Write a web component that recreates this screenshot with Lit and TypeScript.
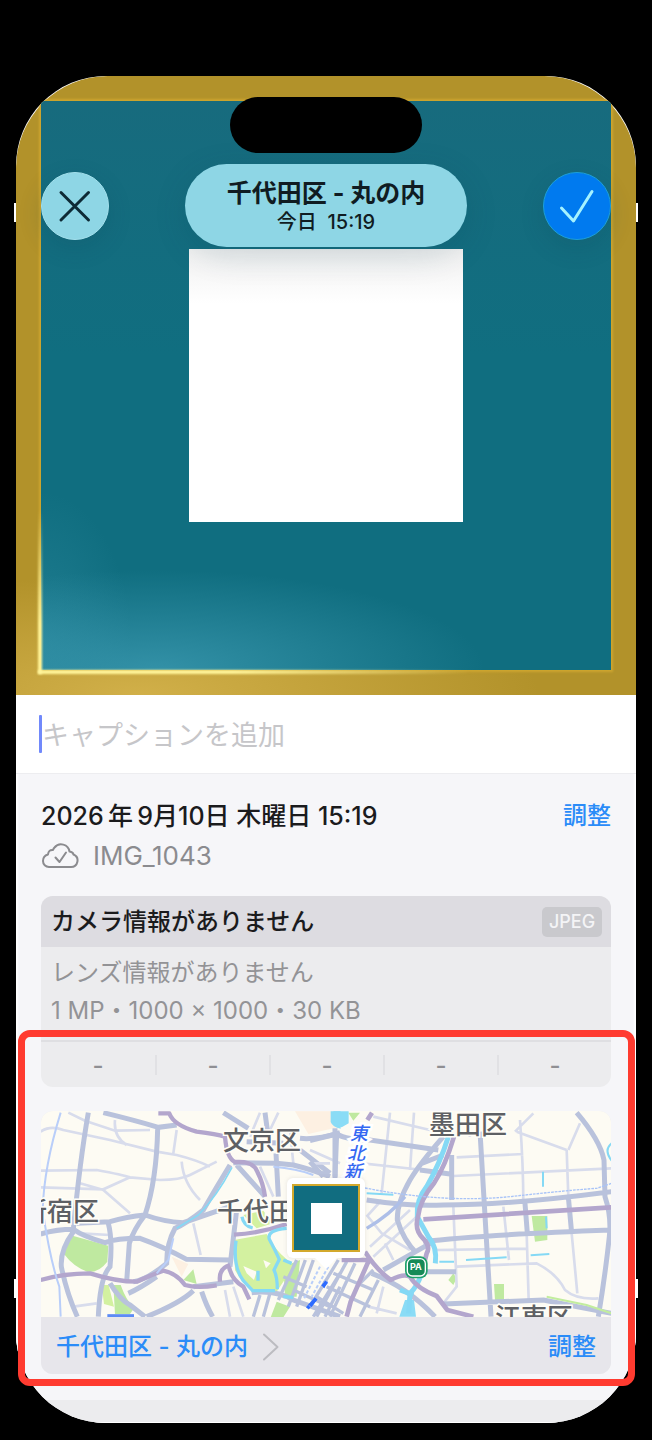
import { LitElement, html, css, svg } from "lit";
import { customElement, property } from "lit/decorators.js";

const leftHalf = svg`
  <g transform="translate(-11 -11) scale(.33333)">
    <g fill="#bfe9a0">
      <path d="M120 405L235 437 232 485Q205 520 172 515 130 500 102 462Z"/>
      <path d="M250 555L272 555Q288 600 312 625L300 642 255 642Z"/>
      <path d="M460 540L490 508 500 552ZM740 605L780 620 760 652 722 652ZM760 500L810 480 800 590 765 590Z"/>
    </g>
    <g fill="#d3f1a0">
      <path d="M612 420L710 402Q735 450 770 478L790 500 740 575 680 575Q640 560 615 510Z"/>
      <path d="M640 345L700 332 730 370 680 385ZM215 555L236 555 252 620 222 612Z"/>
    </g>
    <path fill="#fdf0e2" d="M425 470L475 492 455 530ZM795 34L930 34 930 80 835 102Z"/>
    <path fill="#fdfbf3" d="M640 498L680 515 672 540 650 520ZM700 480L722 490 708 505Z"/>
    <path fill="#8adcf6" d="M902 34h30v52q-24-4-30-20z"/>
    <g fill="none" stroke="#d8dcec" stroke-width="8">
      <path d="M32 95Q60 75 100 90L240 120 380 155 440 165Q500 180 540 200M115 38L165 62 255 92 360 90M255 60Q250 110 290 135M440 90L430 160M32 212L200 210Q280 225 300 232L390 240Q450 240 480 225L560 185M32 262L220 268 300 232M150 250L220 270 300 340M455 185Q460 250 510 300M490 370L512 465M150 400L240 405M130 620L200 610M585 570L600 650M610 560L640 650M690 38L660 110M745 38L720 90M690 200L730 290M840 150L930 190M780 90L790 190"/>
    </g>
    <g fill="none" stroke="#b9c2dc" stroke-width="15">
      <path d="M175 38Q150 180 130 388M220 38Q310 60 385 82L440 75M383 85Q380 240 345 345 310 390 298 430L290 545M600 195Q560 260 520 330 470 370 435 385 410 430 410 490 350 540 310 545M140 370Q180 368 240 365 290 350 345 345 400 365 460 368L600 320M32 402Q80 388 130 388 160 410 225 428 260 415 330 415 400 440 470 478L600 480M235 370Q248 420 240 500 210 530 205 650M130 395Q90 450 94 500 110 580 142 650M240 550Q270 600 300 615L345 650M380 530Q330 565 295 580M350 650Q450 610 490 572M515 575Q530 620 548 650M580 38L655 85M705 38L712 90M738 160L745 290M610 188L740 190 790 195Q850 210 900 230M620 195L705 290M810 150L900 220M930 98Q860 120 810 115M915 85V235M650 125L760 130M620 330L600 500M490 560L610 545M665 578Q740 570 790 600L930 650"/>
    </g>
    <g fill="none" stroke="#b9c2dc" stroke-width="10">
      <path d="M800 480L745 600M826 480L775 620M850 480L800 620M690 585L670 650M720 580L700 650M930 520L850 650M930 560L885 650M790 570L900 620M760 530L830 560"/>
    </g>
    <g fill="none" stroke="#b3a6cd" stroke-width="13" stroke-linejoin="round">
      <path d="M385 40H418Q430 75 500 95 560 102 585 110 590 175 615 186 670 182 682 215 700 250 705 290M32 540Q100 520 180 520 260 545 320 545 370 522 400 512 440 520 465 555 500 566 560 556M570 545Q565 505 600 495M597 500Q605 540 640 560L658 598M612 404Q690 400 770 372"/>
    </g>
    <g fill="none" stroke="#85d9f5" stroke-width="10">
      <path d="M770 385Q710 390 718 418 735 450 748 478L732 510Q742 530 742 568M618 422Q608 500 640 542L668 572 735 572M636 350Q640 376 668 384M684 512V542M760 480L785 490M760 590L790 592"/>
      <path stroke-width="5" d="M606 202Q560 290 505 345L440 385"/>
    </g>
    <g fill="none" stroke="#b9cef9" stroke-width="6">
      <path d="M92 38Q42 200 38 330 60 480 88 560L92 650M430 415L415 480 380 520M730 200Q800 205 850 225"/>
      <path stroke-dasharray="10 6" d="M870 500L820 600M895 500L845 590"/>
    </g>
    <path fill="none" stroke="#2d6bff" stroke-width="11" d="M888 542L878 562M858 595L832 625"/>
    <path fill="none" stroke="#5d8bf5" stroke-width="9" d="M232 647H312"/>
  </g>`;

const rightHalf = svg`
  <g transform="translate(269 -11) scale(.33333)">
    <path fill="#bfe9a0" d="M665 348H712V420L675 425ZM552 552H582V600H555ZM115 38H150L130 62ZM415 540L430 520 440 535 430 555Z"/>
    <path fill="#8adcf6" d="M70 34H116V70L95 82 72 74ZM285 600H312L318 650H268Z"/>
    <g fill="none" stroke="#d8dcec" stroke-width="8">
      <path d="M240 38L215 280M312 38L300 210M630 60Q640 200 640 310M770 150L775 290M810 70L775 150M620 95L770 150M615 95L670 40M440 172L640 162M430 228L905 205M110 185L340 210M190 50L360 90M785 400L802 580M650 400L656 600M430 320L440 560 400 610M580 320L597 480M380 450L650 446M440 500L680 490Q740 520 765 570 800 600 865 595M170 345L215 400 300 450M190 470L320 350M180 440L300 330M215 300L170 350M250 480L225 430M470 60L480 110M0 190H60M175 620L260 640M220 560L200 640"/>
    </g>
    <g fill="none" stroke="#b9c2dc" stroke-width="15">
      <path d="M0 122L80 102Q110 120 180 120L385 150M80 100L75 230M0 185L40 230M400 110Q330 190 300 240 260 310 262 360 280 420 320 460M425 165V300M510 95L543 650M800 38Q870 120 882 180L885 290Q905 350 898 410 885 530 865 650M170 300Q300 320 400 315 600 315 905 275M340 425Q500 405 905 390M775 290L785 400M645 310L652 400M220 510L370 425M350 515H438M400 612L700 600Q800 620 905 640M185 520Q290 560 375 650M330 210L420 222M400 165L335 190"/>
    </g>
    <g fill="none" stroke="#b9c2dc" stroke-width="10">
      <path d="M85 480L0 620M110 485L20 650M135 490L60 650M205 540L150 650M190 510L140 560M70 520L190 570M50 560L180 620M20 590L100 640"/>
    </g>
    <path fill="none" stroke="#aebfe8" stroke-width="10" d="M170 385Q240 345 285 290"/>
    <g fill="none" stroke="#85d9f5" stroke-width="15">
      <path d="M415 110Q390 190 350 260 318 300 322 350L355 410Q382 440 376 490"/>
      <path d="M335 520Q322 560 300 580L296 640M270 570L310 585"/>
      <path stroke-width="6" d="M388 485H432M468 480L590 472M662 466L718 462M699 215V260M905 130Q880 150 905 182M708 350L710 385M170 280L250 284"/>
    </g>
    <path fill="none" stroke="#c2ed9e" stroke-width="6" d="M710 590L830 615 905 640"/>
    <g fill="none" stroke="#b3a6cd" stroke-width="14" stroke-linejoin="round">
      <path d="M186 38L172 60M432 110Q405 200 372 250 330 300 324 350 312 390 340 416 362 440 350 460L345 480M340 358L905 322M165 455Q200 510 242 540 280 520 300 530 320 565 380 588L412 630 490 650M178 478L122 605 110 650M95 480H178"/>
    </g>
    <path fill="none" stroke="#a9c4f8" stroke-width="4" stroke-dasharray="8 3" d="M165 264Q400 310 600 290 780 270 860 265L905 250"/>
    <path fill="none" stroke="#2d6bff" stroke-width="11" d="M50 545L38 560M18 595L0 618"/>
    <g>
      <rect x="285" y="469" width="68" height="66" rx="22" fill="#20a16c"/>
      <rect x="292" y="476" width="54" height="52" rx="15" fill="#168a58" stroke="#fff" stroke-width="4"/>
    </g>
  </g>`;

@customElement("round-button")
class RoundButton extends LitElement {
  @property() label = "";
  @property() kind = "close";
  static styles = css`
    :host { display: block; }
    button {
      display: grid; place-items: center; width: 68px; height: 68px; padding: 0;
      border-radius: 50%; border: 1px solid #a3e0ec; background: #8ed6e5; color: #0d2a35;
      box-shadow: 0 8px 24px rgba(10, 60, 80, 0.16);
    }
    .done { background: #007aef; border-color: #1c9fd8; color: #a4f2ff; }
    svg { display: block; width: 66px; height: 66px; }
  `;
  render() {
    return html`<button class=${this.kind} aria-label=${this.label}>
      <svg viewBox="1 1 66 66" fill="none" stroke="currentColor" stroke-width="3" stroke-linecap="round" stroke-linejoin="round">
        ${this.kind === "close"
          ? svg`<path d="M20 20.500L47.500 48M47.500 20.500L20 48"/>`
          : svg`<path d="M18.500 36L30.500 49 49 19.500"/>`}
      </svg>
    </button>`;
  }
}

@customElement("photo-map")
class PhotoMap extends LitElement {
  static styles = css`
    :host { display: block; position: relative; height: 206px; overflow: hidden; background: #fdfbf3; }
    .map { display: block; width: 100%; height: 100%; }
    text { font-family: Inter, "Noto Sans CJK JP", sans-serif; }
    .ward { font-size: 26px; font-weight: 500; fill: #5e6064; stroke: #fffef8; stroke-width: 3px; paint-order: stroke; }
    .line { font-size: 18px; font-weight: 500; font-style: italic; fill: #3468f2; stroke: #fff; stroke-width: 5px; paint-order: stroke; }
    .pa { font-size: 9px; font-weight: 700; fill: #fff; }
    .pin {
      position: absolute; left: 50%; top: 67px; transform: translateX(-50%);
      width: 78px; height: 80px; box-sizing: border-box; padding: 6px 5px;
      border-radius: 6px; background: #fff; box-shadow: 0 0 4px rgba(90, 90, 110, 0.15);
    }
    .pin::after {
      content: ""; position: absolute; left: 50%; top: 100%; margin-left: -11px;
      border: 11px solid transparent; border-top-color: #fff; border-bottom: 0;
    }
    .thumb {
      display: grid; place-items: center; box-sizing: border-box; height: 100%;
      border: 2px solid #d3a92c; background: #116d80;
    }
    .thumb span { width: 31px; height: 31px; background: #fff; }
  `;
  render() {
    return html`
      <svg class="map" viewBox="0 0 570 206" preserveAspectRatio="xMidYMid slice" role="img" aria-label="地図">
        ${leftHalf}${rightHalf}
        <text class="ward" x="182" y="39">文京区</text>
        <text class="ward" x="388" y="23">墨田区</text>
        <text class="ward" x="-20" y="110">新宿区</text>
        <text class="ward" x="176" y="110">千代田区</text>
        <text class="ward" x="454" y="216">江東区</text>
        <text class="line" x="309" y="29">東</text>
        <text class="line" x="306" y="49">北</text>
        <text class="line" x="303" y="67">新</text>
        <text class="pa" x="369" y="159">PA</text>
      </svg>
      <div class="pin"><div class="thumb"><span></span></div></div>
    `;
  }
}

@customElement("app-root")
class AppRoot extends LitElement {
  static styles = css`
    :host {
      display: block; min-height: 100vh; box-sizing: border-box; padding: 76px 16px 17px;
      background: #000; color: #1b1b1d;
      font: 500 24px/32px Inter, "Noto Sans CJK JP", sans-serif;
    }
    .device { position: relative; }
    .device::before, .device::after {
      content: ""; position: absolute; left: -2px; right: -2px; height: 19px;
      border: solid #fff; border-width: 0 2px;
    }
    .device::before { top: 127px; }
    .device::after { bottom: 125px; }
    .screen { border-radius: 90px; overflow: hidden; background: #fff; }
    .photo {
      position: relative; aspect-ratio: 620 / 619; box-sizing: border-box; padding: 25px;
      border-radius: 92px 92px 0 0;
      background:
        radial-gradient(ellipse 400px 120px at 20% 100%, rgba(222, 188, 86, 0.7), transparent),
        #b2922a;
    }
    .canvas {
      position: relative; display: grid; place-items: center; height: 100%;
      box-shadow: 0 0 2px 2px #cda52f;
      background:
        linear-gradient(rgba(40, 100, 120, 0.3), transparent 45%),
        radial-gradient(ellipse 330px 100px at 20% 100%, rgba(66, 160, 184, 0.7), transparent),
        radial-gradient(ellipse 90px 150px at 0% 95%, rgba(66, 160, 184, 0.3), transparent),
        #106e80;
    }
    .canvas::before, .canvas::after { content: ""; position: absolute; filter: blur(1px); }
    .canvas::before {
      left: -3px; bottom: -4px; width: 76%; height: 4px;
      background: linear-gradient(90deg, #fff49a 45%, rgba(240, 200, 80, 0));
    }
    .canvas::after {
      left: -3px; bottom: -4px; width: 4px; height: 165px;
      background: linear-gradient(0deg, #fff49a 30%, rgba(240, 200, 80, 0));
    }
    .square {
      width: 48%; aspect-ratio: 1;
      background: linear-gradient(#f0f0f0, #fff 20%);
    }
    .island {
      position: absolute; top: 21px; left: 50%; transform: translateX(-50%);
      width: 192px; height: 56px; border-radius: 28px; background: #000;
    }
    .toolbar {
      position: absolute; top: 88px; left: 25px; right: 25px;
      display: flex; align-items: center; justify-content: space-between;
    }
    .title {
      display: flex; flex-direction: column; align-items: center; justify-content: center;
      width: 282px; height: 83px; box-sizing: border-box; padding-top: 2px; border-radius: 42px;
      background: #8ed6e5; color: #101c22; box-shadow: 0 8px 32px rgba(10, 60, 80, 0.16);
    }
    h1 { margin: 0; font: inherit; font-size: 25px; font-weight: 700; line-height: 30px; }
    .time { font-size: 20px; line-height: 28px; white-space: pre; }
    .caption {
      display: flex; align-items: center; height: 78px; padding: 0 23px;
      border-bottom: 1px solid #ededf0;
    }
    .caret { width: 3px; height: 38px; border-radius: 1px; background: #7189fb; }
    input {
      flex: 1; min-width: 0; border: 0; padding: 4px 0 0; outline: 0; background: none;
      color: #1b1b1d; font: 400 27px/40px Inter, "Noto Sans CJK JP", sans-serif;
    }
    input::placeholder { color: #c6c6c9; opacity: 1; }
    .details {
      display: flex; flex-direction: column; gap: 24px; padding: 26px 25px;
      background: #f6f6f9; box-shadow: inset 3px 0 2px -1px #fff, inset -3px 0 2px -1px #fff;
    }
    .info { display: flex; flex-direction: column; gap: 8px; }
    .row { display: flex; align-items: center; justify-content: space-between; }
    .date { font-size: 25px; }
    .link { border: 0; padding: 0; background: none; color: #2b8cf8; font: inherit; text-decoration: none; }
    .file { display: flex; align-items: center; gap: 14px; color: #8b8b8f; font-size: 26px; font-weight: 400; }
    .cloud { width: 38px; height: 28px; }
    .card { border-radius: 12px; overflow: hidden; background: #ececee; }
    .head { height: 51px; padding: 0 9px 0 10px; background: #dddce1; }
    .badge {
      display: grid; place-items: center; width: 60px; height: 30px; border-radius: 5px;
      background: #c9c9cd; color: #f4f4f6; font-size: 18px; line-height: 30px;
    }
    .lens { padding: 7px 10px 10px; line-height: 38px; color: #939396; font-weight: 400; }
    .lens p { margin: 0; }
    .stats { display: grid; grid-template-columns: repeat(5, 1fr); align-items: center; height: 45px; border-top: 2px solid #dfdfe2; }
    .stats span { height: 20px; line-height: 22px; text-align: center; color: #8f8f93; }
    .stats span + span { border-left: 2px solid #e1e1e4; }
    .place { height: 57px; padding: 2px 15px 0; box-sizing: border-box; background: #e7e6eb; }
    .place a { display: flex; align-items: center; gap: 14px; }
    .chevron { width: 18px; height: 28px; }
    .next { height: 22px; border-bottom: 1px solid #fff; background: #ececee; }
    .highlight {
      position: absolute; left: 2px; right: 1px; bottom: 37px; height: 356px;
      box-sizing: border-box; border: 7px solid #ff3b30; border-radius: 12px; pointer-events: none;
    }
  `;
  render() {
    return html`
      <main class="device">
        <div class="screen">
          <div class="photo">
            <div class="canvas"><div class="square"></div></div>
            <div class="island"></div>
            <header class="toolbar">
              <round-button kind="close" label="閉じる"></round-button>
              <div class="title">
                <h1>千代田区 - 丸の内</h1>
                <div class="time">今日  15:19</div>
              </div>
              <round-button kind="done" label="完了"></round-button>
            </header>
          </div>
          <div class="caption">
            <span class="caret"></span>
            <input type="text" aria-label="キャプション" placeholder="キャプションを追加" />
          </div>
          <div class="details">
            <section class="info">
              <div class="row">
                <span class="date">2026&thinsp;年&thinsp;9月10日 木曜日 15:19</span>
                <button class="link">調整</button>
              </div>
              <div class="file">
                <svg class="cloud" viewBox="0 0 38 28" fill="none" stroke="currentColor" stroke-width="2" stroke-linecap="round" stroke-linejoin="round">
                  <path d="M8 25H30A6.500 6.500 0 0 0 32.500 12.500Q32 10 28.500 9.500A8.500 8.500 0 0 0 13.500 5.500Q12.500 6.500 12 8 7.500 7.500 7 12.500 2 14 2 19A6 6 0 0 0 8 25Z"/>
                  <path d="M14.500 15.500L18.500 20 25 10.500"/>
                </svg>
                <span>IMG_1043</span>
              </div>
            </section>
            <section class="card">
              <div class="row head"><span>カメラ情報がありません</span><span class="badge">JPEG</span></div>
              <div class="lens">
                <p>レンズ情報がありません</p>
                <p>1 MP・1000 × 1000・30 KB</p>
              </div>
              <div class="stats">${[0, 1, 2, 3, 4].map(() => html`<span>-</span>`)}</div>
            </section>
            <section class="card">
              <photo-map></photo-map>
              <div class="row place">
                <a class="link" href="#place">千代田区 - 丸の内
                  <svg class="chevron" viewBox="0 0 18 28" fill="none" stroke="#bcbcc1" stroke-width="2" stroke-linecap="round" stroke-linejoin="round"><path d="M2 1.500L15.500 14 2 26.500"/></svg>
                </a>
                <button class="link">調整</button>
              </div>
            </section>
          </div>
          <div class="next"></div>
        </div>
        <div class="highlight"></div>
      </main>
    `;
  }
}
